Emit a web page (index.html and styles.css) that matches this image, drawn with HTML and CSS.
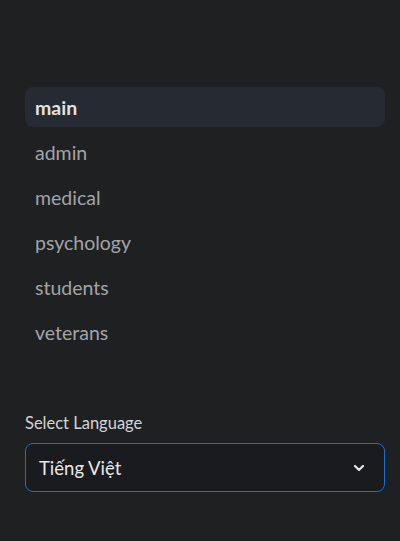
FILE: index.html
```html
<!DOCTYPE html>
<html>
<head>
<meta charset="utf-8">
<link rel="stylesheet" href="styles.css">
</head>
<body>
<aside class="sidebar">
  <nav class="nav">
    <a class="nav-item active">main</a>
    <a class="nav-item">admin</a>
    <a class="nav-item">medical</a>
    <a class="nav-item">psychology</a>
    <a class="nav-item">students</a>
    <a class="nav-item">veterans</a>
  </nav>
  <div class="field">
    <label class="field-label">Select Language</label>
    <div class="select">
      <span class="select-value">Tiếng Việt</span>
      <svg class="chevron" width="16" height="16" viewBox="0 0 16 16"><path d="M4 6 L8 10 L12 6" fill="none" stroke="#e6e6e6" stroke-width="2.2" stroke-linecap="round" stroke-linejoin="round"/></svg>
    </div>
  </div>
</aside>
</body>
</html>
```
FILE: styles.css
```css
html, body {
  margin: 0;
  padding: 0;
  background: #1f2022;
  height: 100%;
}
body {
  font-family: "Lato", "Open Sans", sans-serif;
}
.sidebar {
  padding: 87px 15px 0 25px;
  display: flex;
  flex-direction: column;
}
.nav {
  display: flex;
  flex-direction: column;
  gap: 5px;
}
.nav-item {
  height: 40px;
  display: flex;
  align-items: center;
  padding-left: 10px;
  border-radius: 8px;
  font-size: 19.5px;
  color: #a3a4a7;
}
.nav-item.active {
  background: #262a32;
  color: #e2e2e3;
  font-weight: 700;
}
.field {
  margin-top: 60px;
  display: flex;
  flex-direction: column;
}
.field-label {
  font-size: 16.5px;
  color: #d4d4d6;
  height: 22px;
  line-height: 22px;
  margin-bottom: 9px;
}
.select {
  height: 47px;
  border: 1px solid #1d6ed0;
  border-radius: 8px;
  background: #1a1b1e;
  display: flex;
  align-items: center;
  justify-content: space-between;
  padding: 0 17px 0 13px;
}
.select-value {
  font-size: 18.5px;
  color: #e8e8e8;
}
.chevron {
  display: block;
}
```
